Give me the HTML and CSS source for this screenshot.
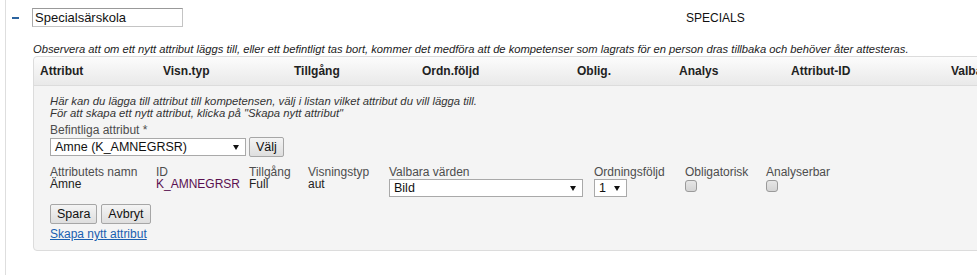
FILE: index.html
```html
<!DOCTYPE html>
<html>
<head>
    <title>Kompetens</title>
    <link rel="stylesheet" href="styles.css">
</head>
<body>
<div class="page">
    <div class="item-head">
        <span class="toggle"><span class="minus"></span></span>
        <input type="text" class="name-input" value="Specialsärskola">
        <span class="code">SPECIALS</span>
    </div>
    <div class="item-body">
        <p class="note">Observera att om ett nytt attribut läggs till, eller ett befintligt tas bort, kommer det medföra att de kompetenser som lagrats för en person dras tillbaka och behöver åter attesteras.</p>
        <div class="panel">
            <div class="panel-head">
                <span>Attribut</span>
                <span>Visn.typ</span>
                <span>Tillgång</span>
                <span>Ordn.följd</span>
                <span>Oblig.</span>
                <span>Analys</span>
                <span>Attribut-ID</span>
                <span>Valbara värden</span>
            </div>
            <div class="panel-content">
                <p class="intro">Här kan du lägga till attribut till kompetensen, välj i listan vilket attribut du vill lägga till.<br>För att skapa ett nytt attribut, klicka på "Skapa nytt attribut"</p>
                <div class="label">Befintliga attribut *</div>
                <div class="pick-row">
                    <div class="select select-wide">Amne (K_AMNEGRSR)<span class="arrow"></span></div>
                    <button class="btn">Välj</button>
                </div>
                <div class="fields">
                    <div class="field">
                        <div class="label">Attributets namn</div>
                        <div class="value">Ämne</div>
                    </div>
                    <div class="field">
                        <div class="label">ID</div>
                        <div class="value id">K_AMNEGRSR</div>
                    </div>
                    <div class="field">
                        <div class="label">Tillgång</div>
                        <div class="value">Full</div>
                    </div>
                    <div class="field">
                        <div class="label">Visningstyp</div>
                        <div class="value">aut</div>
                    </div>
                    <div class="field">
                        <div class="label">Valbara värden</div>
                        <div class="select select-values">Bild<span class="arrow"></span></div>
                    </div>
                    <div class="field">
                        <div class="label">Ordningsföljd</div>
                        <div class="select select-order">1<span class="arrow"></span></div>
                    </div>
                    <div class="field">
                        <div class="label">Obligatorisk</div>
                        <span class="check"></span>
                    </div>
                    <div class="field">
                        <div class="label">Analyserbar</div>
                        <span class="check"></span>
                    </div>
                </div>
                <div class="actions">
                    <button class="btn">Spara</button>
                    <button class="btn">Avbryt</button>
                </div>
                <a href="#" class="link">Skapa nytt attribut</a>
            </div>
        </div>
    </div>
</div>
</body>
</html>
```

FILE: styles.css
```css
html, body {
    margin: 0;
    height: 100%;
    overflow: hidden;
}
body {
    font-family: "Liberation Sans", Arial, sans-serif;
    font-size: 12px;
    color: #222;
    background-color: #fff;
}
.page {
    margin-left: 5px;
    border-left: 1px solid #dedede;
    height: 100%;
    width: 1100px;
}
.item-head {
    display: flex;
    align-items: center;
    padding-top: 8px;
    height: 19px;
}
.toggle {
    width: 26px;
    display: flex;
    align-items: center;
}
.minus {
    display: block;
    margin-left: 6px;
    width: 7px;
    height: 2px;
    background-color: #2c64a0;
}
.name-input {
    box-sizing: border-box;
    width: 151px;
    height: 19px;
    margin: 0;
    padding: 0 2px;
    font-family: inherit;
    font-size: 13px;
    color: #111;
    border: 1px solid #c4c4c4;
    border-top-color: #999;
    border-left-color: #aaa;
}
.code {
    margin-left: 503px;
    color: #111;
}
.item-body {
    padding-left: 27px;
}
.note {
    margin: 16px 0 0;
    line-height: 13px;
    font-size: 11.2px;
    font-style: italic;
    color: #222;
}
.panel {
    width: 1000px;
    border: 1px solid #dcdcdc;
    border-radius: 4px;
    background-color: #f4f4f4;
}
.panel-head {
    display: grid;
    grid-template-columns: 123px 131px 128px 155px 102px 112px 160px auto;
    align-items: center;
    height: 28px;
    padding-left: 6px;
    font-weight: bold;
    color: #222;
    white-space: nowrap;
    background: linear-gradient(#fcfcfc, #e9e9e9);
    border-bottom: 1px solid #dcdcdc;
    border-radius: 4px 4px 0 0;
}
.panel-content {
    padding: 9px 16px 9px;
}
.intro {
    margin: 0;
    line-height: 12px;
    font-size: 11.3px;
    font-style: italic;
    color: #333;
}
.label {
    color: #4d4d4d;
    line-height: 12px;
    white-space: nowrap;
}
.panel-content > .label {
    margin-top: 4px;
    line-height: 14px;
}
.pick-row {
    display: flex;
    align-items: center;
    gap: 3px;
}
.select {
    position: relative;
    box-sizing: border-box;
    height: 18px;
    line-height: 16px;
    padding-left: 4px;
    font-size: 12.5px;
    color: #111;
    background-color: #fff;
    border: 1px solid #a9a9a9;
}
.arrow {
    position: absolute;
    right: 6px;
    top: 6px;
    border-left: 3px solid transparent;
    border-right: 3px solid transparent;
    border-top: 5px solid #111;
}
.select-wide {
    width: 196px;
}
.select-values {
    width: 194px;
    margin-top: 1px;
}
.select-order {
    width: 33px;
    margin-top: 1px;
}
.btn {
    box-sizing: border-box;
    height: 20px;
    margin: 0;
    padding: 0 6px;
    font-family: inherit;
    font-size: 12.5px;
    color: #111;
    background: linear-gradient(#f4f4f4, #dedede);
    border: 1px solid #a6a6a6;
    border-radius: 2px;
}
.fields {
    display: grid;
    grid-template-columns: 106px 93px 59px 81px 205px 91px 81px auto;
    margin-top: 9px;
}
.value {
    line-height: 12px;
    color: #222;
}
.value.id {
    color: #5a1050;
}
.check {
    display: block;
    box-sizing: border-box;
    width: 12px;
    height: 12px;
    margin-top: 2px;
    background: linear-gradient(#e6e6e6, #d4d4d4);
    border: 1px solid #9a9a9a;
    border-radius: 3px;
}
.actions {
    display: flex;
    gap: 4px;
    margin-top: 7px;
}
.link {
    display: inline-block;
    margin-top: 3px;
    line-height: 14px;
    color: #1a5fb0;
    text-decoration: underline;
}
```
